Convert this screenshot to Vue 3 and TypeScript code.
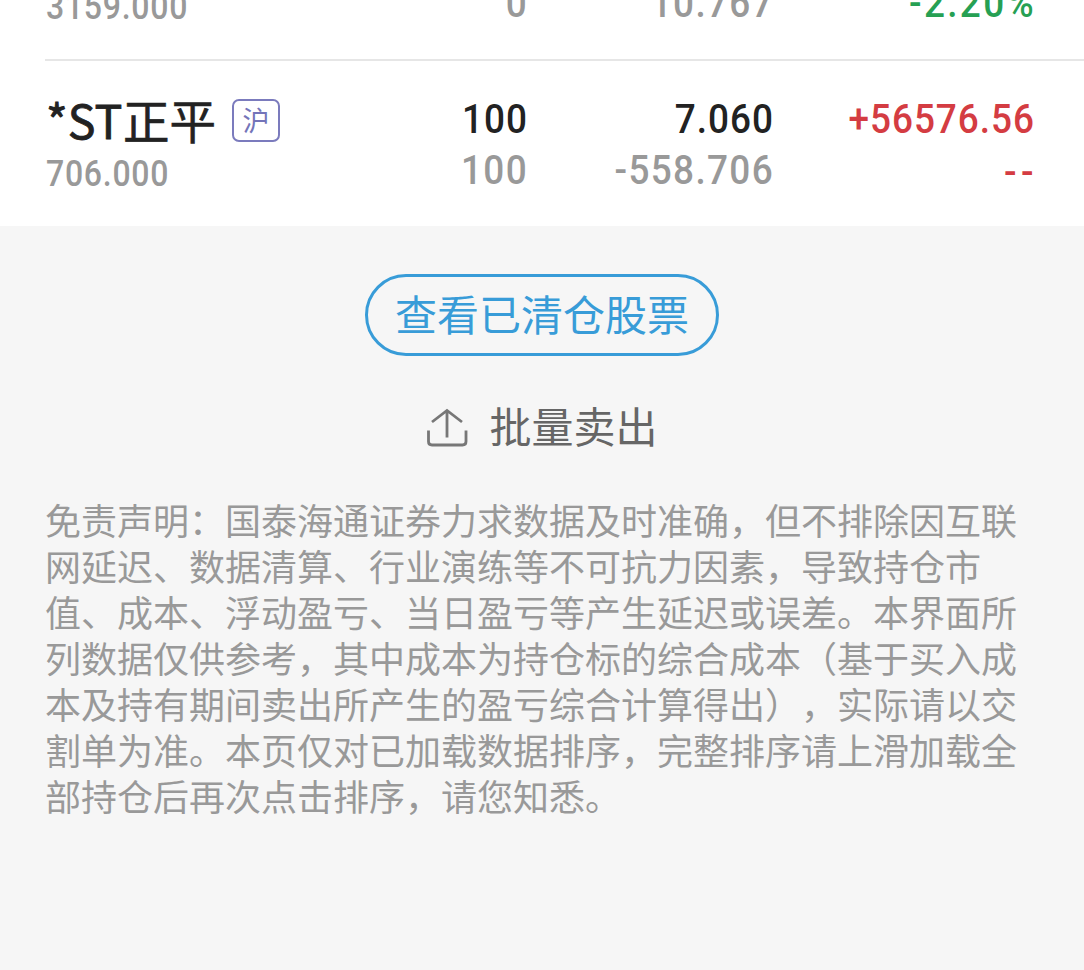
<script setup lang="ts">
interface Holding {
  name: string
  market: string
  value: string
  amount: string
  available: string
  price: string
  cost: string
  profit: string
  ratio: string
  trend: 'up' | 'down'
}

const holdings: Holding[] = [
  { name: '', market: '', value: '3159.000', amount: '', available: '0', price: '', cost: '10.767', profit: '', ratio: '-2.20%', trend: 'down' },
  { name: '正平', market: '沪', value: '706.000', amount: '100', available: '100', price: '7.060', cost: '-558.706', profit: '+56576.56', ratio: '--', trend: 'up' },
]

const disclaimer =
  '免责声明：国泰海通证券力求数据及时准确，但不排除因互联网延迟、数据清算、行业演练等不可抗力因素，导致持仓市值、成本、浮动盈亏、当日盈亏等产生延迟或误差。本界面所列数据仅供参考，其中成本为持仓标的综合成本（基于买入成本及持有期间卖出所产生的盈亏综合计算得出），实际请以交割单为准。本页仅对已加载数据排序，完整排序请上滑加载全部持仓后再次点击排序，请您知悉。'
</script>

<template>
  <main class="page" lang="zh-CN">
    <section class="holdings">
      <article v-for="h in holdings" :key="h.value" class="row">
        <div class="stock">
          <div class="title">
            <template v-if="h.name">
              <span class="prefix">*ST</span><span class="name">{{ h.name }}</span>
              <span class="market">{{ h.market }}</span>
            </template>
          </div>
          <div class="value"><span class="num">{{ h.value }}</span></div>
        </div>
        <div class="cell">
          <div class="line"><span class="num">{{ h.amount }}</span></div>
          <div class="line sub"><span class="num">{{ h.available }}</span></div>
        </div>
        <div class="cell">
          <div class="line"><span class="num">{{ h.price }}</span></div>
          <div class="line sub"><span class="num">{{ h.cost }}</span></div>
        </div>
        <div class="cell" :class="h.trend">
          <div class="line"><span class="num">{{ h.profit }}</span></div>
          <div class="line"><span class="num" :class="h.ratio === '--' ? 'dashes' : 'percent'">{{ h.ratio }}</span></div>
        </div>
      </article>
    </section>

    <section class="actions">
      <button class="cleared" type="button">查看已清仓股票</button>
      <button class="batch" type="button">
        <svg class="upload" viewBox="0 0 42 40" fill="none" stroke="#777" stroke-width="2.8">
          <path d="M6 14 21 2.500 36 14M21 3V29.500" />
          <path d="M2.500 22.500V33.500Q2.500 37 6 37H36.500Q40 37 40 33.500V22.500" />
        </svg>
        <span>批量卖出</span>
      </button>
    </section>

    <p class="disclaimer">{{ disclaimer }}</p>
  </main>
</template>

<style>
body {
  background: #f6f6f6;
}
</style>

<style scoped>
.page {
  width: 1084px;
  height: 970px;
  overflow: hidden;
  background: #f6f6f6;
  font-family: "Noto Sans CJK SC", sans-serif;
}
.holdings {
  margin-top: -106px;
  background: #fff;
}
.row {
  position: relative;
  display: grid;
  grid-template-columns: 254px 227px 246px 261px;
  height: 165px;
  box-sizing: border-box;
  padding: 32px 0 0 46px;
}
.row + .row {
  margin-top: 2px;
}
.row + .row::before {
  content: "";
  position: absolute;
  left: 45px;
  right: 0;
  top: -2px;
  height: 2px;
  background: #e6e6e6;
}
.cell {
  text-align: right;
  color: #222;
}
.line {
  height: 51px;
  font-family: Roboto, sans-serif;
  font-size: 41.5px;
  line-height: 51px;
}
.num {
  display: block;
  font-weight: 500;
  letter-spacing: 1.1px;
  margin-right: -1px;
  transform: scaleX(0.89);
  transform-origin: right;
  white-space: nowrap;
}
.num.dashes {
  letter-spacing: 5px;
  margin-right: -4px;
  padding-top: 2px;
}
.num.percent {
  letter-spacing: 2.6px;
  margin-right: -2px;
}
.sub {
  color: #999;
}
.sub .num {
  letter-spacing: 1.5px;
}
.up {
  color: #d43c42;
}
.down {
  color: #26a053;
}
.title {
  display: flex;
  align-items: center;
  height: 56px;
  color: #222;
  font-size: 46.5px;
  line-height: 56px;
  white-space: nowrap;
}
.prefix,
.name {
  margin-top: -4px;
}
.prefix {
  width: 77px;
  -webkit-text-stroke: 0.8px currentColor;
}
.name {
  -webkit-text-stroke: 0.6px currentColor;
}
.market {
  box-sizing: border-box;
  width: 48px;
  height: 43px;
  margin: -2px 0 0 16px;
  border: 2px solid #7b7bbd;
  border-radius: 7px;
  color: #7474b9;
  font-size: 27px;
  line-height: 37px;
  text-align: center;
}
.value {
  height: 44px;
  color: #999;
  font-family: Roboto, sans-serif;
  font-size: 36px;
  line-height: 50px;
}
.value .num {
  letter-spacing: 0.8px;
  transform-origin: left;
}
.actions {
  display: flex;
  flex-direction: column;
  align-items: center;
  padding-top: 48px;
}
button {
  padding: 0;
  background: none;
  font-family: inherit;
  font-size: 42px;
}
.cleared {
  box-sizing: border-box;
  width: 354px;
  height: 82px;
  padding-bottom: 5px;
  border: 3px solid #389cd8;
  border-radius: 41px;
  color: #389cd8;
  line-height: 71px;
}
.batch {
  display: flex;
  align-items: center;
  height: 60px;
  margin-top: 42px;
  border: 0;
  color: #666;
  line-height: 60px;
}
.batch span {
  margin-top: -6px;
}
.upload {
  width: 42px;
  height: 40px;
  margin-right: 21px;
}
.disclaimer {
  width: 973px;
  margin: 38px 0 0 45px;
  color: #999;
  font-size: 36px;
  line-height: 46px;
  text-spacing-trim: space-all;
}
</style>
